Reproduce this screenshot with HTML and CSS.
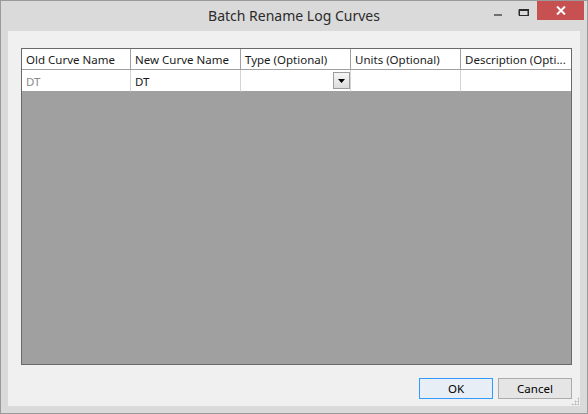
FILE: index.html
```html
<!DOCTYPE html>
<html lang="en">
<head>
    <meta charset="UTF-8">
    <title>Batch Rename Log Curves</title>
    <link rel="stylesheet" href="styles.css">
</head>
<body>
    <div class="window">
        <div class="titlebar">
            <div class="title">Batch Rename Log Curves</div>
            <div class="controls">
                <div class="ctl ctl-min">
                    <svg width="10" height="19" viewBox="0 0 10 19"><rect x="1" y="13" width="8" height="2" fill="#707070"/></svg>
                </div>
                <div class="ctl ctl-max">
                    <svg width="12" height="19" viewBox="0 0 12 19"><path d="M1 8.5 H10 V14.5 H1 Z" fill="none" stroke="#2a2a2a" stroke-width="1"/><rect x="1" y="8" width="10" height="2" fill="#2a2a2a"/><path d="M1.5 8 V15 M10.5 8 V15" stroke="#2a2a2a"/></svg>
                </div>
                <div class="ctl ctl-close">
                    <svg width="10" height="9" viewBox="0 0 10 9">
                        <path d="M1 0.5 L9 8.5 M9 0.5 L1 8.5" stroke="#fff" stroke-width="2"/>
                    </svg>
                </div>
            </div>
        </div>

        <div class="client">
            <div class="grid">
                <div class="grid-row grid-head">
                    <div class="cell">Old Curve Name</div>
                    <div class="cell">New Curve Name</div>
                    <div class="cell">Type (Optional)</div>
                    <div class="cell">Units (Optional)</div>
                    <div class="cell">Description (Opti...</div>
                </div>
                <div class="grid-row grid-data">
                    <div class="cell cell-readonly">DT</div>
                    <div class="cell">DT</div>
                    <div class="cell cell-combo">
                        <span class="combo-btn">
                            <svg width="7" height="4" viewBox="0 0 7 4"><path d="M0 0 H7 L3.5 4 Z" fill="#000"/></svg>
                        </span>
                    </div>
                    <div class="cell"></div>
                    <div class="cell"></div>
                </div>
            </div>

            <div class="buttons">
                <button class="btn btn-default">OK</button>
                <button class="btn">Cancel</button>
            </div>
            <div class="grip"></div>
        </div>
    </div>
</body>
</html>
```

FILE: styles.css
```css
body {
  margin: 0;
  font-family: "Noto Sans", "Open Sans", sans-serif;
}

.window {
  width: 588px;
  height: 414px;
  box-sizing: border-box;
  border: 1px solid #9a9a9a;
  background-color: #dadada;
  padding: 0 7px 7px;
  display: flex;
  flex-direction: column;
}

.titlebar {
  height: 30px;
  position: relative;
  flex: none;
}

.title {
  text-align: center;
  font-size: 14px;
  line-height: 30px;
  color: #2b2b2b;
}

.controls {
  position: absolute;
  top: 0;
  right: -4px;
  display: flex;
}

.ctl {
  height: 19px;
  display: flex;
  justify-content: center;
}

.ctl-min {
  width: 26px;
}

.ctl-max {
  width: 26px;
}

.ctl-close {
  width: 47px;
  align-items: center;
  background-color: #c75050;
}

.client {
  flex: 1;
  background-color: #f0f0f0;
  padding: 17px 8px 7px 13px;
  display: flex;
  flex-direction: column;
  position: relative;
}

.grid {
  flex: 1;
  border: 1px solid #696969;
  background-color: #a0a0a0;
  font-size: 11.5px;
}

.grid-row {
  display: grid;
  grid-template-columns: 109px 110px 110px 110px 110px;
}

.cell {
  height: 22px;
  line-height: 23px;
  padding-left: 4px;
  background-color: #fff;
  border-right: 1px solid #d4d4d4;
  border-bottom: 1px solid #a0a0a0;
  box-sizing: border-box;
  white-space: nowrap;
  overflow: hidden;
  color: #1a1a1a;
}

.grid-head .cell {
  height: 21px;
  line-height: 21px;
  border-right-color: #a0a0a0;
  border-bottom-color: #a0a0a0;
  color: #1a1a1a;
}

.grid-head .cell:last-child,
.grid-data .cell:last-child {
  border-right: none;
}

.cell-readonly {
  color: #8a8a8a;
}

.cell-combo {
  display: flex;
  justify-content: flex-end;
  align-items: flex-start;
  padding: 2px 0 0;
}

.combo-btn {
  width: 17px;
  height: 17px;
  box-sizing: border-box;
  border: 1px solid #9c9c9c;
  background: linear-gradient(#f6f6f6, #dcdcdc);
  display: flex;
  align-items: center;
  justify-content: center;
}

.buttons {
  display: flex;
  justify-content: flex-end;
  gap: 5px;
  margin-top: 13px;
}

.btn {
  width: 74px;
  height: 21px;
  font-family: "Noto Sans", "Open Sans", sans-serif;
  font-size: 11.5px;
  color: #000;
  background-color: #e5e5e5;
  border: 1px solid #acacac;
  padding: 0;
}

.btn-default {
  border-color: #3399ff;
  background-color: #e8eef5;
}

.grip {
  position: absolute;
  right: 1px;
  bottom: 1px;
  width: 8px;
  height: 8px;
  background-image: radial-gradient(#b0b0b0 0.9px, transparent 1.1px);
  background-size: 3px 3px;
  clip-path: polygon(100% 0, 100% 100%, 0 100%);
}
```
